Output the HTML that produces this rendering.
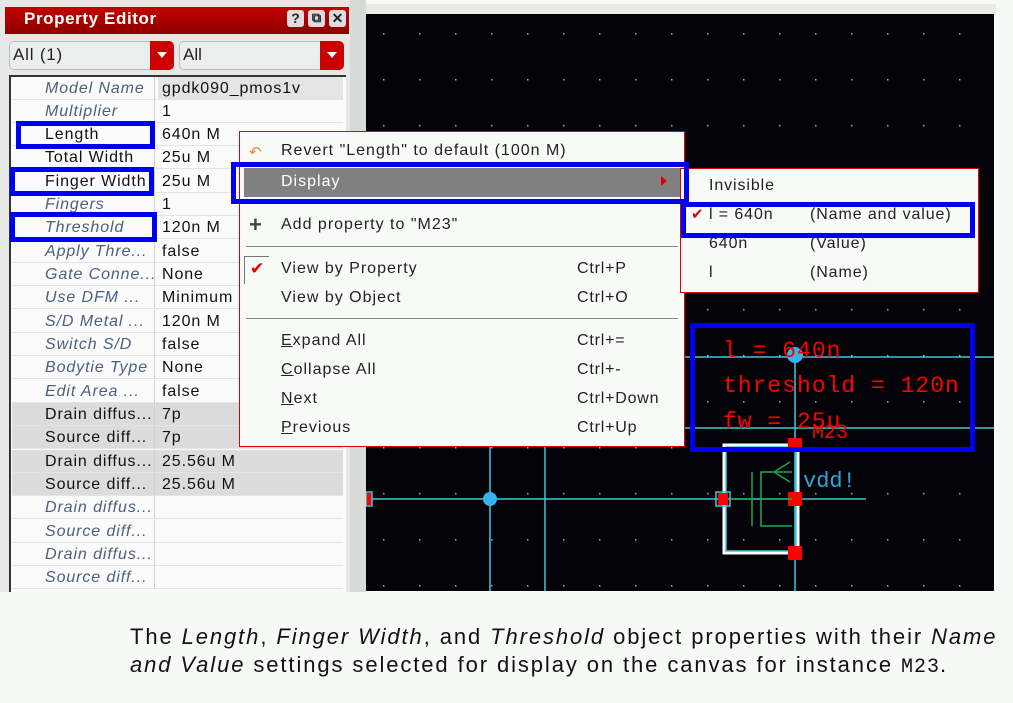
<!DOCTYPE html>
<html><head><meta charset="utf-8"><style>
*{margin:0;padding:0;box-sizing:border-box}
body{width:1013px;height:703px;background:#f7f9f7;position:relative;overflow:hidden;font-family:"Liberation Sans",sans-serif;font-size:16px;color:#111}
.a{position:absolute}
.row{position:absolute;left:12px;width:331px;height:23px;border-bottom:1px solid #e4e4e4;letter-spacing:.9px}
.row .l{position:absolute;left:0;width:143px;height:23px;padding-left:33px;line-height:23px;white-space:nowrap;overflow:hidden;border-right:1px solid #d0d0d0}
.row .v{position:absolute;left:150px;line-height:23px}
.i{font-style:italic;color:#4d5f7e}
.blue{position:absolute;border:5px solid #0000f0}
.mi{position:absolute;left:281px;font-size:16px;color:#222;letter-spacing:1px}
.sc{position:absolute;left:577px;font-size:16px;color:#222;letter-spacing:.8px}
.sub{position:absolute;color:#222;letter-spacing:.9px}
.cap{position:absolute;left:130px;font-size:22px;color:#111;letter-spacing:1.9px;white-space:nowrap}
</style></head><body>
<div class="a" style="left:0;top:0;width:366px;height:592px;background:#e6e8e6"></div>
<div class="a" style="left:5px;top:7px;width:344px;height:27px;background:linear-gradient(#c40000,#8e0000)"></div>
<div class="a" style="left:24px;top:9px;color:#fff;font-weight:bold;font-size:17px;letter-spacing:.6px">Property Editor</div>
<div class="a" style="left:287px;top:10px;width:17px;height:17px;background:#ddd;border-radius:3px;font:bold 14px 'Liberation Sans';text-align:center;color:#222">?</div>
<div class="a" style="left:308px;top:10px;width:17px;height:17px;background:#ddd;border-radius:3px;font:bold 13px 'Liberation Sans';text-align:center;color:#222">⧉</div>
<div class="a" style="left:329px;top:10px;width:17px;height:17px;background:#ddd;border-radius:3px;font:bold 14px 'Liberation Sans';text-align:center;color:#222">✕</div>
<div class="a" style="left:9px;top:41px;width:164px;height:29px;background:#eceeed;border:1px solid #bbb;border-radius:5px"></div>
<div class="a" style="left:150px;top:41px;width:24px;height:29px;background:#c00;border-radius:0 5px 5px 0"></div>
<div class="a" style="left:157px;top:52px;border:5px solid transparent;border-top:6px solid #fff"></div>
<div class="a" style="left:13px;top:45px;font-size:17px;color:#222;letter-spacing:.8px">All (1)</div>
<div class="a" style="left:179px;top:41px;width:165px;height:29px;background:#eceeed;border:1px solid #bbb;border-radius:5px"></div>
<div class="a" style="left:320px;top:41px;width:24px;height:29px;background:#c00;border-radius:0 5px 5px 0"></div>
<div class="a" style="left:327px;top:52px;border:5px solid transparent;border-top:6px solid #fff"></div>
<div class="a" style="left:183px;top:45px;font-size:17px;color:#222">All</div>
<div class="a" style="left:9px;top:75px;width:337px;height:517px;background:#fafbfa;border-left:2px solid #333;border-top:2px solid #333"></div>
<div class="row" style="top:77px;background:#fafbfa"><div class="l i">Model Name</div><div class="v" style="background:#e4e4e4;width:185px;left:146px;padding-left:4px">gpdk090_pmos1v</div></div>
<div class="row" style="top:100px"><div class="l i">Multiplier</div><div class="v">1</div></div>
<div class="row" style="top:123px"><div class="l">Length</div><div class="v">640n M</div></div>
<div class="row" style="top:146px"><div class="l">Total Width</div><div class="v">25u M</div></div>
<div class="row" style="top:170px"><div class="l">Finger Width</div><div class="v">25u M</div></div>
<div class="row" style="top:193px"><div class="l i">Fingers</div><div class="v">1</div></div>
<div class="row" style="top:216px"><div class="l i">Threshold</div><div class="v">120n M</div></div>
<div class="row" style="top:240px"><div class="l i">Apply Thre...</div><div class="v">false</div></div>
<div class="row" style="top:263px"><div class="l i">Gate Conne...</div><div class="v">None</div></div>
<div class="row" style="top:286px"><div class="l i">Use DFM ...</div><div class="v">Minimum</div></div>
<div class="row" style="top:310px"><div class="l i">S/D Metal ...</div><div class="v">120n M</div></div>
<div class="row" style="top:333px"><div class="l i">Switch S/D</div><div class="v">false</div></div>
<div class="row" style="top:356px"><div class="l i">Bodytie Type</div><div class="v">None</div></div>
<div class="row" style="top:380px"><div class="l i">Edit Area ...</div><div class="v">false</div></div>
<div class="row" style="top:403px;background:#dcdcdc"><div class="l">Drain diffus...</div><div class="v">7p</div></div>
<div class="row" style="top:426px;background:#dcdcdc"><div class="l">Source diff...</div><div class="v">7p</div></div>
<div class="row" style="top:450px;background:#dcdcdc"><div class="l">Drain diffus...</div><div class="v">25.56u M</div></div>
<div class="row" style="top:473px;background:#dcdcdc"><div class="l">Source diff...</div><div class="v">25.56u M</div></div>
<div class="row" style="top:496px"><div class="l i">Drain diffus...</div></div>
<div class="row" style="top:520px"><div class="l i">Source diff...</div></div>
<div class="row" style="top:543px"><div class="l i">Drain diffus...</div></div>
<div class="row" style="top:566px"><div class="l i">Source diff...</div></div>
<div class="a" style="left:350px;top:0;width:16px;height:592px;background:#d8dad8"></div>
<div class="a" style="left:366px;top:4px;width:630px;height:10px;background:#e9ebe9"></div>
<svg class="a" style="left:366px;top:14px" width="628" height="577">
<rect width="628" height="577" fill="#020208"/>
<defs><pattern id="d" x="17" y="19" width="36" height="46" patternUnits="userSpaceOnUse"><rect width="1.5" height="1.5" fill="#aaa"/></pattern></defs>
<rect width="628" height="577" fill="url(#d)"/>
<g stroke="#3cc8d8" stroke-width="1.5" fill="none">
<line x1="314" y1="343" x2="628" y2="343"/><line x1="314" y1="414" x2="628" y2="414"/>
<line x1="429" y1="343" x2="429" y2="577"/>
<line x1="0" y1="485" x2="500" y2="485"/>
<line x1="124" y1="432" x2="124" y2="577"/><line x1="179" y1="432" x2="179" y2="577"/>
<rect x="358" y="431" width="74" height="108" stroke="#fff" stroke-width="3"/>
<rect x="360" y="433" width="70" height="104"/>
</g>
<circle cx="124" cy="485" r="7" fill="#36b4ee"/><circle cx="429" cy="341" r="8" fill="#36b4ee"/>
<g fill="#f00"><rect x="422" y="424" width="14" height="14"/><rect x="422" y="478" width="14" height="14"/><rect x="422" y="532" width="14" height="14"/><rect x="352" y="479" width="10" height="12"/><rect x="0" y="479" width="6" height="12"/></g>
<rect x="350" y="478" width="14" height="14" fill="none" stroke="#3cc8d8" stroke-width="1.5"/>
<rect x="0" y="478" width="6" height="14" fill="none" stroke="#3cc8d8" stroke-width="1.5"/>
<g stroke="#1eaa50" stroke-width="1.5" fill="none"><line x1="364" y1="485" x2="386" y2="485"/><line x1="386" y1="458" x2="386" y2="512"/><polyline points="426,458 395,458 395,512 426,512"/><line x1="395" y1="485" x2="426" y2="485"/><polyline points="424,448 408,458 424,468"/></g>
<text x="437" y="473" fill="#2aa8dc" font-family="Liberation Mono" font-size="22">vdd!</text>
<text x="446" y="424" fill="#f00" font-family="Liberation Mono" font-size="20">M23</text>
<g fill="#f00" font-family="Liberation Mono" font-size="23" letter-spacing="1"><text x="357" y="343">l = 640n</text><text x="357" y="378">threshold = 120n</text><text x="357" y="414">fw = 25u</text></g>
</svg>
<div class="a" style="left:239px;top:131px;width:446px;height:316px;background:#f8faf8;border:1px solid #d00"></div>
<div class="a" style="left:244px;top:168px;width:436px;height:29px;background:#808080"></div>
<div class="a" style="left:661px;top:176px;border:5px solid transparent;border-left:6px solid #d00"></div>
<div class="a" style="left:249px;top:143px;color:#e08a30;font-size:15px">↶</div>
<div class="mi" style="top:142px">Revert "Length" to default (100n M)</div>
<div class="mi" style="top:173px;color:#fff">Display</div>
<div class="a" style="left:249px;top:212px;font:bold 22px 'Liberation Sans';color:#444">+</div>
<div class="mi" style="top:216px">Add property to "M23"</div>
<div class="a" style="left:246px;top:246px;width:432px;height:1px;background:#888"></div>
<div class="a" style="left:244px;top:256px;width:25px;height:28px;border-left:1px solid #777;border-top:1px solid #777"></div>
<div class="a" style="left:250px;top:259px;color:#d00;font-size:17px">✔</div>
<div class="mi" style="top:260px">View by Property</div><div class="sc" style="top:260px">Ctrl+P</div>
<div class="mi" style="top:289px">View by Object</div><div class="sc" style="top:289px">Ctrl+O</div>
<div class="a" style="left:246px;top:318px;width:432px;height:1px;background:#888"></div>
<div class="mi" style="top:332px"><u>E</u>xpand All</div><div class="sc" style="top:332px">Ctrl+=</div>
<div class="mi" style="top:361px"><u>C</u>ollapse All</div><div class="sc" style="top:361px">Ctrl+-</div>
<div class="mi" style="top:390px"><u>N</u>ext</div><div class="sc" style="top:390px">Ctrl+Down</div>
<div class="mi" style="top:419px"><u>P</u>revious</div><div class="sc" style="top:419px">Ctrl+Up</div>
<div class="a" style="left:680px;top:168px;width:299px;height:125px;background:#f8faf8;border:1px solid #d00"></div>
<div class="sub" style="left:709px;top:177px">Invisible</div>
<div class="a" style="left:691px;top:205px;color:#d00;font-size:15px">✔</div>
<div class="sub" style="left:709px;top:206px">l = 640n</div><div class="sub" style="left:810px;top:206px">(Name and value)</div>
<div class="sub" style="left:709px;top:235px">640n</div><div class="sub" style="left:810px;top:235px">(Value)</div>
<div class="sub" style="left:709px;top:264px">l</div><div class="sub" style="left:810px;top:264px">(Name)</div>
<div class="blue" style="left:16px;top:121px;width:139px;height:28px"></div>
<div class="blue" style="left:10px;top:167px;width:144px;height:29px"></div>
<div class="blue" style="left:10px;top:212px;width:147px;height:30px"></div>
<div class="blue" style="left:231px;top:162px;width:458px;height:42px"></div>
<div class="blue" style="left:681px;top:202px;width:294px;height:36px"></div>
<div class="blue" style="left:690px;top:323px;width:285px;height:129px"></div>
<div class="cap" style="top:624px">The <i>Length</i>, <i>Finger Width</i>, and <i>Threshold</i> object properties with their <i>Name</i></div>
<div class="cap" style="top:652px"><i>and Value</i> settings selected for display on the canvas for instance <span style="font-family:'Liberation Mono';font-size:20px;letter-spacing:1px">M23</span>.</div>
</body></html>
